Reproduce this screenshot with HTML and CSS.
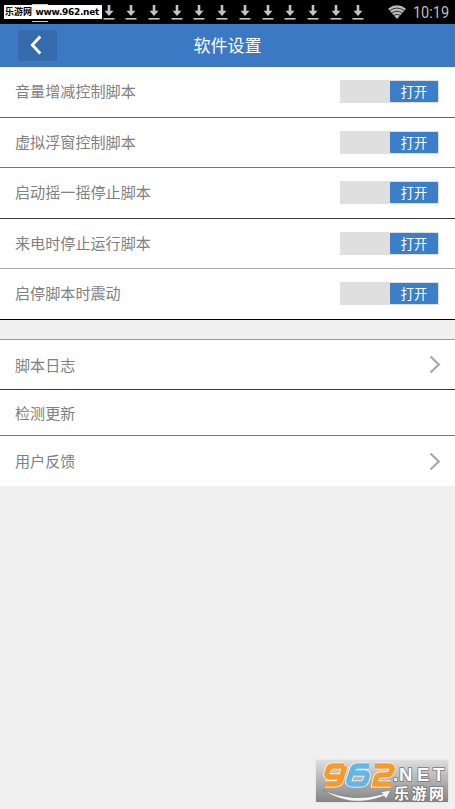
FILE: index.html
```
<!DOCTYPE html>
<html lang="zh-CN">
<head>
    <meta charset="UTF-8">
    <meta name="viewport" content="width=device-width, initial-scale=1.0">
    <title>软件设置</title>
    <link rel="stylesheet" href="styles.css">
</head>
<body>
    <svg class="defs" width="0" height="0">
        <symbol id="download" viewBox="0 0 12 16">
            <path d="M4.7 0h2.6v5.8h3.2L6 11 1.5 5.8h3.2z"/>
            <path d="M.5 13h11v1.6H.5z"/>
        </symbol>
        <symbol id="arrow" viewBox="0 0 12 19">
            <path d="M1.5 1.5l8.3 8-8.3 8" fill="none" stroke="#aaa" stroke-width="2.3"/>
        </symbol>
    </svg>

    <div class="status-bar">
        <div class="site-label"><span>乐游网</span> <b>www.962.net</b></div>
        <div class="downloads">
            <svg><use href="#download"/></svg>
            <svg><use href="#download"/></svg>
            <svg><use href="#download"/></svg>
            <svg><use href="#download"/></svg>
            <svg><use href="#download"/></svg>
            <svg><use href="#download"/></svg>
            <svg><use href="#download"/></svg>
            <svg><use href="#download"/></svg>
            <svg><use href="#download"/></svg>
            <svg><use href="#download"/></svg>
            <svg><use href="#download"/></svg>
            <svg><use href="#download"/></svg>
        </div>
        <svg class="wifi" viewBox="0 0 18 14">
            <path d="M0 3.7Q9-3.2 18 3.7L9 14z" fill="#bbb"/>
            <path d="M1.5 5.8Q9 .3 16.5 5.8M3.5 8.2Q9 4.2 14.5 8.2M5.5 10.5Q9 8 12.5 10.5" fill="none" stroke="#111" stroke-width=".8"/>
        </svg>
        <svg class="clock"><text x="0" y="16" textLength="36" lengthAdjust="spacingAndGlyphs">10:19</text></svg>
    </div>

    <header class="header">
        <button class="back" aria-label="返回">
            <svg viewBox="0 0 12 20"><path d="M10.3 1.5L2.3 10l8 8.5" fill="none" stroke="#fff" stroke-width="2.8"/></svg>
        </button>
        <h1>软件设置</h1>
    </header>

    <ul class="list switches">
        <li class="line-mid"><span>音量增减控制脚本</span><div class="toggle"><b>打开</b></div></li>
        <li class="short line-soft"><span>虚拟浮窗控制脚本</span><div class="toggle"><b>打开</b></div></li>
        <li class="line-dark"><span>启动摇一摇停止脚本</span><div class="toggle"><b>打开</b></div></li>
        <li class="short line-light"><span>来电时停止运行脚本</span><div class="toggle"><b>打开</b></div></li>
        <li class="line-black"><span>启停脚本时震动</span><div class="toggle"><b>打开</b></div></li>
    </ul>

    <ul class="list links">
        <li class="short line-dark"><span>脚本日志</span><svg class="arrow"><use href="#arrow"/></svg></li>
        <li class="update line-soft"><span>检测更新</span></li>
        <li class="short"><span>用户反馈</span><svg class="arrow"><use href="#arrow"/></svg></li>
    </ul>

    <div class="watermark">
        <svg viewBox="0 0 132 42">
            <g class="digits">
                <g stroke="#fff" stroke-width="7">
                    <path d="M28 6H17q-4 0-5 4l-1 3q-1 4 3 4h11M29 6l-4 13q-1 5-6 5H9"/>
                    <path d="M53 6H42q-5 0-6 5l-3 9q-1 4 3 4h9q4 0 5-4l1-3q1-4-3-4H36"/>
                    <path d="M59 6h14q4 0 3 4l-1 2q-1 3-5 3h-5q-4 0-5 4l-1 5h16"/>
                </g>
                <g stroke="#f79a2c" stroke-width="5.5">
                    <path d="M28 6H17q-4 0-5 4l-1 3q-1 4 3 4h11M29 6l-4 13q-1 5-6 5H9"/>
                    <path d="M53 6H42q-5 0-6 5l-3 9q-1 4 3 4h9q4 0 5-4l1-3q1-4-3-4H36" stroke="#66b5e5"/>
                    <path d="M59 6h14q4 0 3 4l-1 2q-1 3-5 3h-5q-4 0-5 4l-1 5h16"/>
                </g>
            </g>
            <path d="M7 30Q37 43 67 34l-3-2 11-2-5 9-2-3Q35 49 7 30z" fill="#f4f4f4" stroke="#777" stroke-width=".6"/>
            <text class="net" x="77 83 101 117" y="21">.NET</text>
            <text class="name" x="78" y="39" textLength="50">乐游网</text>
        </svg>
    </div>
</body>
</html>
```
FILE: styles.css
```
* {
    margin: 0;
    padding: 0;
    box-sizing: border-box;
}
body {
    position: relative;
    min-height: 100vh;
    background: #f0f0f0;
    font-family: "Noto Sans CJK SC", sans-serif;
}
.defs {
    position: absolute;
}
.status-bar {
    display: flex;
    align-items: flex-start;
    height: 24px;
    padding-left: 4px;
    background: #000;
}
.site-label {
    position: relative;
    display: flex;
    align-items: center;
    justify-content: space-between;
    width: 98px;
    height: 14px;
    margin-top: 5px;
    padding: 0 3px 0 1px;
    background: #fff;
    color: #000;
    font-size: 9px;
    font-weight: 700;
    line-height: 14px;
    white-space: nowrap;
}
/* notification icon sticking out above and below the label */
.site-label::before {
    content: "";
    position: absolute;
    left: 28px;
    top: -1px;
    width: 16px;
    height: 16px;
    border-top: 1px solid #ccc;
    border-bottom: 1px solid #ccc;
}
.site-label b {
    font-family: "DejaVu Sans", sans-serif;
    font-size: 9px;
    letter-spacing: -0.3px;
}
.downloads {
    display: flex;
    justify-content: space-between;
    width: 262px;
    margin: 5px 0 0 0.5px;
}
.downloads svg {
    width: 12px;
    height: 16px;
    fill: #c4c4c4;
}
.wifi {
    width: 18px;
    height: 14px;
    margin: 5px 0 0 23.5px;
}
.clock {
    width: 40px;
    height: 24px;
    margin: 2px 0 0 6.5px;
    fill: #bcbcbc;
    font-family: Roboto, sans-serif;
    font-size: 16px;
}
.header {
    display: grid;
    grid-template-columns: 57px 1fr 57px;
    align-items: center;
    height: 43px;
    background: #3b79c4;
    border-bottom: 1px solid #4576ab;
}
.back {
    display: flex;
    align-items: center;
    justify-content: center;
    width: 39px;
    height: 31px;
    margin-left: 18px;
    padding-right: 3px;
    border: none;
    border-radius: 2px;
    background: #356bad;
}
.back svg {
    width: 12px;
    height: 20px;
}
.header h1 {
    color: #fff;
    font-size: 17px;
    font-weight: 400;
    line-height: 24px;
    text-align: center;
}
.list {
    list-style: none;
    background: #fff;
}
.list li {
    display: flex;
    justify-content: space-between;
    align-items: center;
    height: 51px;
    padding: 0 14px 0 15px;
    color: #808080;
    font-size: 15.1px;
    font-weight: 400;
    line-height: 22px;
}
.list li.short {
    height: 50px;
}
.list li.update {
    height: 46px;
}
.switches li {
    align-items: flex-start;
    padding: 13px 16px 0 15px;
}
.switches span {
    line-height: 21px;
}
.links {
    margin-top: 19px;
    border-top: 1px solid #999;
}
.links span {
    padding-bottom: 2px;
}
.list .line-mid {
    border-bottom: 1px solid #666;
}
.list .line-soft {
    border-bottom: 1px solid #777;
}
.list .line-dark {
    border-bottom: 1px solid #3a3a3a;
}
.list .line-light {
    border-bottom: 1px solid #aaa;
}
.list .line-black {
    border-bottom: 1px solid #000;
}
.toggle {
    display: flex;
    justify-content: flex-end;
    width: 99px;
    height: 23px;
    padding: 1px;
    background: #dfdfdf;
}
.toggle b {
    width: 48px;
    height: 21px;
    border-radius: 1px;
    background: #3a7fc8;
    color: #fff;
    font-size: 13.2px;
    font-weight: 400;
    line-height: 21px;
    text-align: center;
}
.arrow {
    width: 12px;
    height: 19px;
}
.watermark {
    position: absolute;
    left: 315px;
    top: 759px;
    width: 134px;
    height: 44px;
    border: 1px solid #e8e8e8;
    background: linear-gradient(#dedede, #858585);
}
.watermark svg {
    display: block;
    width: 100%;
    height: 100%;
}
.digits {
    fill: none;
}
.net,
.name {
    fill: #fff;
    stroke: #777;
    stroke-width: 1.6px;
    paint-order: stroke;
    font-weight: 700;
}
.net {
    font-family: "Liberation Sans", sans-serif;
    font-size: 18.5px;
}
.name {
    font-size: 15px;
}
```
